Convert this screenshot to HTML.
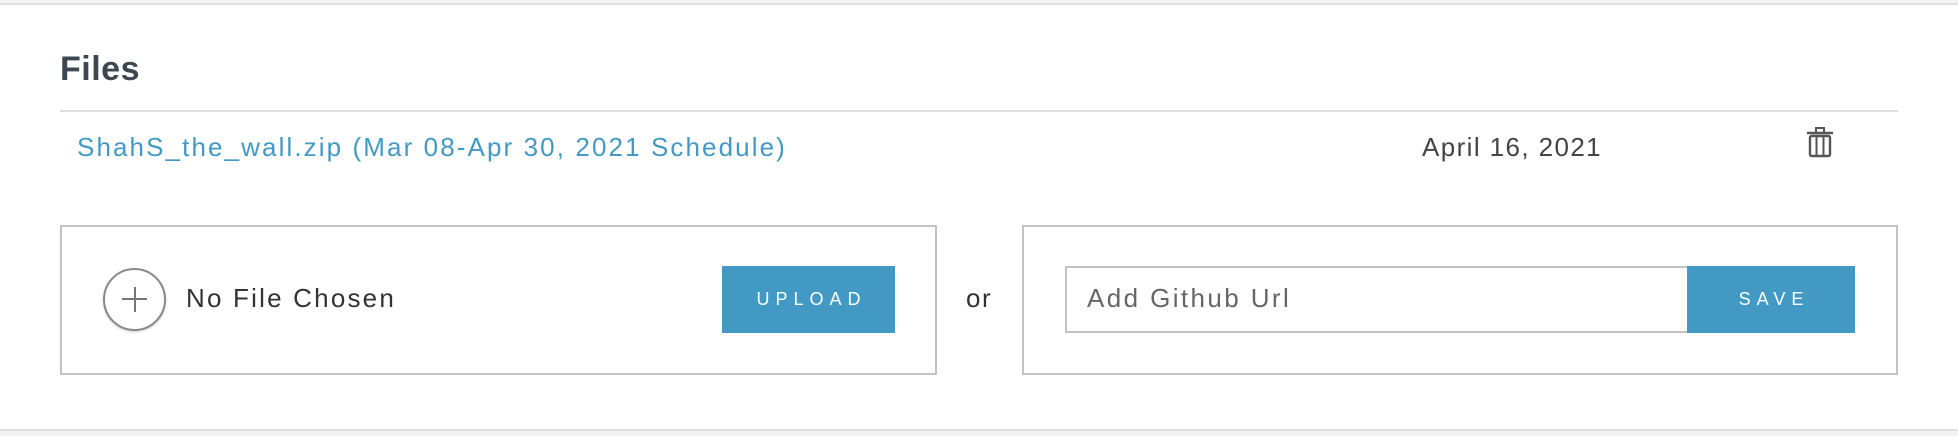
<!DOCTYPE html>
<html><head><meta charset="utf-8"><style>
*{margin:0;padding:0;box-sizing:border-box}
body{width:1958px;height:436px;background:#f2f2f4;font-family:"Liberation Sans",sans-serif;position:relative;overflow:hidden}
.card{position:absolute;left:0;top:3px;width:1958px;height:428px;background:#fff;border-top:2px solid #e0e0e0;border-bottom:2px solid #e0e0e2}
.a{position:absolute;white-space:nowrap}
</style></head><body>
<div class="card"></div>
<div class="a" style="left:60px;top:49px;font-size:34px;font-weight:bold;color:#3d4752;line-height:40px;letter-spacing:0.5px">Files</div>
<div class="a" style="left:60px;top:110px;width:1838px;height:2px;background:#dedede"></div>
<div class="a" style="left:77px;top:132px;font-size:26px;line-height:30px;color:#4399c6;letter-spacing:2.1px">ShahS_the_wall.zip (Mar 08-Apr 30, 2021 Schedule)</div>
<div class="a" style="left:1422px;top:132px;font-size:26px;line-height:30px;color:#444;letter-spacing:1.4px">April 16, 2021</div>
<svg class="a" style="left:1806px;top:126px" width="28" height="32" viewBox="0 0 28 32">
<path d="M10 6V2h8v4" fill="none" stroke="#555" stroke-width="2"/>
<path d="M1 7h26" stroke="#555" stroke-width="2.4"/>
<rect x="4" y="10" width="20" height="20" rx="1.5" fill="none" stroke="#555" stroke-width="2.4"/>
<path d="M10.5 11v18M17.5 11v18" stroke="#555" stroke-width="2"/>
</svg>
<div class="a" style="left:60px;top:225px;width:877px;height:150px;border:2px solid #c2c2c2"></div>
<div class="a" style="left:103px;top:268px;width:63px;height:63px;border-radius:50%;border:2.5px solid #888;box-shadow:0 1px 2px rgba(0,0,0,.2)"></div>
<div class="a" style="left:122px;top:298px;width:25px;height:2px;background:#777"></div>
<div class="a" style="left:133.5px;top:287px;width:2px;height:25px;background:#777"></div>
<div class="a" style="left:186px;top:283px;font-size:26px;line-height:30px;color:#333;letter-spacing:2.2px">No File Chosen</div>
<div class="a" style="left:722px;top:266px;width:173px;height:67px;background:#4299c4;color:#fff;font-size:18px;line-height:67px;text-align:center;letter-spacing:6px;padding-left:6px">UPLOAD</div>
<div class="a" style="left:966px;top:283px;font-size:26px;line-height:30px;color:#333;letter-spacing:1.5px">or</div>
<div class="a" style="left:1022px;top:225px;width:876px;height:150px;border:2px solid #c2c2c2"></div>
<div class="a" style="left:1065px;top:266px;width:624px;height:67px;border:2px solid #c2c2c2"></div>
<div class="a" style="left:1087px;top:283px;font-size:26px;line-height:30px;color:#666;letter-spacing:2.4px">Add Github Url</div>
<div class="a" style="left:1687px;top:266px;width:168px;height:67px;background:#4299c4;color:#fff;font-size:18px;line-height:67px;text-align:center;letter-spacing:6px;padding-left:6px">SAVE</div>
</body></html>
